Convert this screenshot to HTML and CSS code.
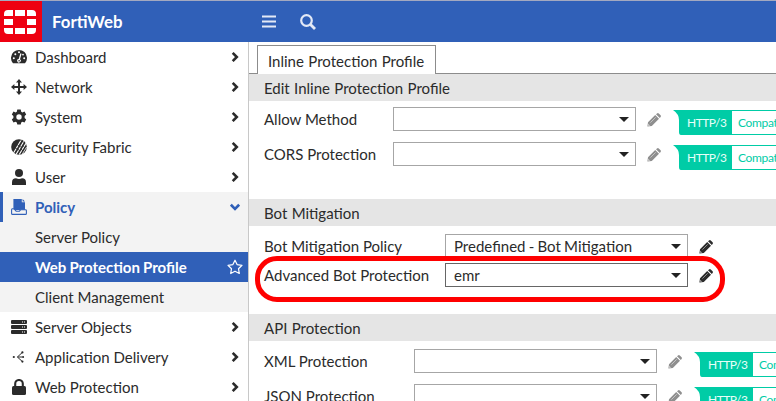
FILE: index.html
```html
<!DOCTYPE html>
<html lang="en">
<head>
<meta charset="utf-8">
<title>FortiWeb</title>
<link rel="stylesheet" href="styles.css">
</head>
<body>
<svg class="defs" width="0" height="0">
  <symbol id="chev" viewBox="0 0 8 10"><path d="M1.7 .9 5.8 5 1.7 9.1" fill="none" stroke="currentColor" stroke-width="2.6"/></symbol>
  <symbol id="pencil" viewBox="0 0 14 14"><path fill="currentColor" d="M.4 13.6 1 9.2 8.2 2l3.8 3.8L4.8 13zM9 1.2 10 .4q.9-.7 1.8 0l1.8 1.8q.7.9 0 1.8l-.8 1z"/><path d="m3.4 9.6 5.3-5.3" stroke="#fff" stroke-width=".8" opacity=".6"/><path d="M1.2 10.8v1.9h1.9z" fill="#fff" opacity=".7"/></symbol>
  <symbol id="flag" viewBox="0 0 59 25"><path fill="#00cca6" d="M0 0H59V25H8Q6 25 6 22V10Q6 4 0 0Z"/></symbol>
</svg>
<header class="topbar">
  <div class="logo">
    <svg width="32" height="24" viewBox="0 0 32 24" fill="#fff"><path d="M0 6V4Q0 0 4 0H9V6zM11 0H21V6H11zM23 0H28Q32 0 32 4V6H23zM0 9H9V15H0zM23 9H32V15H23zM0 18H9V24H4Q0 24 0 20zM11 18H21V24H11zM23 18H32V20Q32 24 28 24H23z"/></svg>
  </div>
  <div class="brand">FortiWeb</div>
  <svg class="burger" width="14" height="13" viewBox="0 0 14 13"><path d="M0 1.5H14M0 6.5H14M0 11.5H14" stroke="#e3e9f6" stroke-width="2"/></svg>
  <svg class="search" width="16" height="16" viewBox="0 0 16 16" fill="none" stroke="#e3e9f6"><circle cx="6.5" cy="6.5" r="5.3" stroke-width="2.2"/><path d="m10.5 10.5 4.5 4.5" stroke-width="2.8"/></svg>
</header>
<div class="layout">
  <nav class="sidebar">
    <div class="item"><svg class="ico" viewBox="0 0 16 16"><path fill="currentColor" d="M1.8 14A8 8 0 1 1 14.2 14Q14 14.3 13.5 14.3H2.5Q2 14.3 1.8 14z"/><g fill="#fff"><circle cx="2.8" cy="9.3" r="1"/><circle cx="4.3" cy="5.2" r="1"/><circle cx="8" cy="3.3" r="1"/><circle cx="13.2" cy="9.3" r="1"/><circle cx="12" cy="5.6" r=".9"/><path d="m9.4 4.3 1.2.4L9 10.2a1.8 1.8 0 1 1-1.3-.3z"/></g><circle cx="8.1" cy="11.8" r=".8" fill="currentColor"/></svg><span>Dashboard</span><svg class="chev"><use href="#chev"/></svg></div>
    <div class="item"><svg class="ico" viewBox="0 0 16 16"><path fill="currentColor" d="m8 0 3 3.4H9V7h3.6V5L16 8l-3.4 3V9H9v3.6h2L8 16l-3-3.4h2V9H3.4v2L0 8l3.4-3v2H7V3.4H5z"/></svg><span>Network</span><svg class="chev"><use href="#chev"/></svg></div>
    <div class="item"><svg class="ico" viewBox="0 0 16 16"><path fill="currentColor" fill-rule="evenodd" d="M6.3.5h3.4l.5 2.2 1.2.7 2.1-.8 1.7 3L13.6 7v2l1.6 1.5-1.7 3-2.1-.8-1.2.7-.5 2.2H6.3l-.5-2.2-1.2-.7-2.1.8-1.7-3L2.4 9V7L.8 5.6l1.7-3 2.1.8 1.2-.7zM8 5.3a2.7 2.7 0 1 0 0 5.4 2.7 2.7 0 0 0 0-5.4z"/></svg><span>System</span><svg class="chev"><use href="#chev"/></svg></div>
    <div class="item"><svg class="ico" viewBox="0 0 16 16"><circle cx="8" cy="8" r="7.8" fill="currentColor"/><path d="M2.5 14 10.5.5M5 15.5 13 2M8.2 15.5 15 4.3" stroke="#fff" stroke-width="1.1" stroke-dasharray="5 .7 3 .5"/><path d="M11 15.5 15.6 8" stroke="#fff" stroke-width=".8"/></svg><span>Security Fabric</span><svg class="chev"><use href="#chev"/></svg></div>
    <div class="item"><svg class="ico" viewBox="0 0 16 16" fill="currentColor"><circle cx="8" cy="4" r="4"/><path d="M1 15.9V13.4Q1 9.2 5 9.2 8 10.6 11 9.2q4 0 4 4.2v2.5z"/></svg><span>User</span><svg class="chev"><use href="#chev"/></svg></div>
    <div class="item open"><svg class="ico" viewBox="0 0 16 16"><path fill="currentColor" d="M2.4 0h8.4v3.2h3.2V11H2.4zM11.6 0 14 2.4h-2.4z"/><path d="M2.4 9.8H1.2Q.6 10.2.6 11v3.4q0 1 1 1h12.8q1 0 1-1v-2.8q0-.9-1-.9H9.8L8.4 12.2H5.2L4 10.8z" fill="#f3f3f3" stroke="currentColor" stroke-width="1.1"/></svg><span>Policy</span><svg class="chev down"><use href="#chev"/></svg></div>
    <div class="item sub"><span>Server Policy</span></div>
    <div class="item sub active"><span>Web Protection Profile</span><svg class="star" viewBox="0 0 16 16"><path d="m8 1.2 2.1 4.4 4.9.7-3.5 3.4.8 4.8L8 12.2l-4.3 2.3.8-4.8L1 6.3l4.9-.7z" fill="none" stroke="#fff" stroke-width="1.2" stroke-linejoin="round"/></svg></div>
    <div class="item sub"><span>Client Management</span></div>
    <div class="item"><svg class="ico" viewBox="0 0 16 16"><g fill="currentColor"><rect y="1" width="16" height="4" rx="1"/><rect y="6" width="16" height="4" rx="1"/><rect y="11" width="16" height="4" rx="1"/></g><path d="M11 3h1m1 0h1M11 8h1m1 0h1M11 13h1m1 0h1" stroke="#fff" stroke-width="1"/></svg><span>Server Objects</span><svg class="chev"><use href="#chev"/></svg></div>
    <div class="item"><svg class="ico" viewBox="0 0 16 16"><g fill="currentColor"><circle cx="2.8" cy="8" r="1.1"/><circle cx="11.4" cy="3.4" r="1.1"/><circle cx="12.2" cy="8" r=".9"/><circle cx="11.4" cy="12.6" r="1.1"/></g><path d="M11.2 3.6 6.4 8l4.8 4.4M6.5 8H12" fill="none" stroke="currentColor" stroke-width="1"/></svg><span>Application Delivery</span><svg class="chev"><use href="#chev"/></svg></div>
    <div class="item"><svg class="ico" viewBox="0 0 16 16"><rect x="1" y="7" width="14" height="9" rx="1.5" fill="currentColor"/><path d="M4.2 8V4.8a3.8 3.8 0 0 1 7.6 0V8" fill="none" stroke="currentColor" stroke-width="2.1"/></svg><span>Web Protection</span><svg class="chev"><use href="#chev"/></svg></div>
  </nav>
  <main class="main">
    <div class="tabs"><div class="tab">Inline Protection Profile</div></div>
    <h2 class="section">Edit Inline Protection Profile</h2>
    <div class="group general">
      <div class="row"><label>Allow Method</label><div class="select"></div><svg class="pencil off"><use href="#pencil"/></svg><div class="badge"><svg class="flag"><use href="#flag"/></svg><b>HTTP/3</b><i>Compat</i></div></div>
      <div class="row"><label>CORS Protection</label><div class="select"></div><svg class="pencil off"><use href="#pencil"/></svg><div class="badge"><svg class="flag"><use href="#flag"/></svg><b>HTTP/3</b><i>Compat</i></div></div>
    </div>
    <h2 class="section">Bot Mitigation</h2>
    <div class="group bot">
      <div class="row"><label>Bot Mitigation Policy</label><div class="select">Predefined - Bot Mitigation</div><svg class="pencil"><use href="#pencil"/></svg></div>
      <div class="row"><label>Advanced Bot Protection</label><div class="select focus">emr</div><svg class="pencil"><use href="#pencil"/></svg></div>
      <div class="ring"></div>
    </div>
    <h2 class="section">API Protection</h2>
    <div class="group api">
      <div class="row"><label>XML Protection</label><div class="select"></div><svg class="pencil off"><use href="#pencil"/></svg><div class="badge"><svg class="flag"><use href="#flag"/></svg><b>HTTP/3</b><i>Com</i></div></div>
      <div class="row"><label>JSON Protection</label><div class="select"></div><svg class="pencil off"><use href="#pencil"/></svg><div class="badge"><svg class="flag"><use href="#flag"/></svg><b>HTTP/3</b><i>Com</i></div></div>
    </div>
  </main>
</div>
</body>
</html>
```
FILE: styles.css
```css
* { box-sizing: border-box; }
body {
  margin: 0;
  height: 401px;
  overflow: hidden;
  background: #fff;
  color: #2b2b2b;
  font: 15px/20px Lato, "Liberation Sans", sans-serif;
}
svg { display: block; flex: none; }
.defs { position: absolute; }

.topbar {
  display: flex;
  align-items: center;
  height: 42px;
  border-top: 1px solid #a3a9c0;
  background: #3060b8;
}
.logo {
  display: flex;
  align-items: center;
  width: 42px;
  height: 41px;
  padding-left: 4px;
  background: #ee0011;
}
.brand {
  width: 220px;
  padding-left: 10px;
  color: #fff;
  font-size: 16.8px;
  font-weight: 700;
}
.search { margin-left: 24px; }

.layout { display: flex; height: 359px; }
.sidebar {
  flex: none;
  width: 249px;
  border-right: 1px solid #c8c8c8;
}
.item {
  display: flex;
  align-items: center;
  height: 30px;
  padding: 0 9px 0 11px;
}
.item span { flex: 1; }
.ico { width: 16px; height: 16px; margin-right: 8px; }
.chev { width: 8px; height: 10px; }
.open {
  padding-left: 8px;
  border-left: 3px solid #3060b8;
  background: #f3f3f3;
  color: #3060b8;
  font-weight: 700;
}
.down { transform: rotate(90deg); }
.sub { padding-left: 35px; background: #f3f3f3; }
.active {
  padding-right: 5px;
  background: #3060b8;
  color: #fff;
  font-weight: 700;
  word-spacing: -.6px;
}
.star { width: 16px; height: 16px; }

.main { flex: 1; min-width: 0; overflow: hidden; }
.tabs {
  display: flex;
  height: 32px;
  padding: 3px 0 0 8px;
  border-bottom: 1px solid #8c8c8c;
}
.tab {
  width: 179px;
  height: 29px;
  padding: 5px 0 0 10px;
  border: 1px solid #8c8c8c;
  border-bottom: 0;
  background: #fff;
  white-space: nowrap;
  word-spacing: .6px;
}
.section {
  height: 27px;
  margin: 0;
  padding-left: 15px;
  background: #e5e5e5;
  font-size: 15px;
  font-weight: 400;
  line-height: 29px;
  word-spacing: .5px;
}
.group { display: flex; flex-direction: column; padding-left: 15px; }
.row { display: flex; align-items: center; height: 24px; flex: none; }
.row label { flex: none; width: 129px; white-space: nowrap; }
.general { height: 98px; padding-top: 6px; gap: 11px; }
.bot { position: relative; height: 88px; padding-top: 8px; gap: 5px; }
.bot label { width: 181px; }
.api { padding-top: 8px; gap: 11px; }
.api label { width: 150px; }
.select {
  position: relative;
  flex: none;
  width: 243px;
  height: 24px;
  padding-left: 8px;
  border: 1px solid #a6a6a6;
  line-height: 23px;
  word-spacing: -.6px;
}
.select::after {
  content: "";
  position: absolute;
  top: 9px;
  right: 6px;
  border: 5px solid transparent;
  border-top-color: #222;
  border-bottom: 0;
}
.focus { border-color: #666; }
.pencil { width: 14px; height: 14px; margin: 2px 0 0 11px; color: #2b2b2b; }
.off { color: #8f8f8f; }
.badge {
  position: relative;
  flex: 1;
  min-width: 0;
  display: flex;
  height: 25px;
  margin: 7px 0 0 12px;
  color: #00cca6;
  font-size: 12px;
  line-height: 25px;
}
.flag { position: absolute; width: 59px; height: 25px; }
.badge b {
  position: relative;
  flex: none;
  width: 59px;
  padding-left: 14px;
  color: #e8fff9;
  font-size: 12px;
  font-weight: 400;
  letter-spacing: -.5px;
}
.badge i {
  flex: 1;
  min-width: 0;
  padding-left: 6px;
  border: solid #00cca6;
  border-width: 1px 0;
  font-style: normal;
  line-height: 24px;
  letter-spacing: -.35px;
}
.ring {
  position: absolute;
  top: 30px;
  left: 6px;
  width: 470px;
  height: 46px;
  border: 5px solid #f00;
  border-radius: 22px;
}
```
